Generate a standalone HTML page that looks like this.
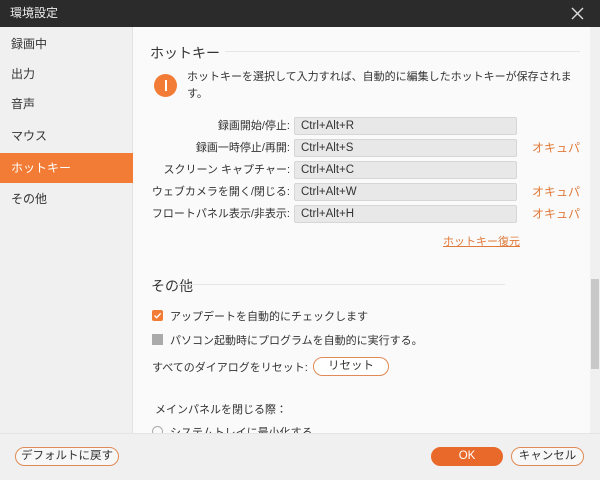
<!DOCTYPE html><html><head><meta charset="utf-8"><style>
*{margin:0;padding:0;box-sizing:border-box}
body{width:600px;height:480px;overflow:hidden;font-family:"Liberation Sans","Noto Sans CJK JP",sans-serif;font-size:11px;color:#333;background:#fafafa;position:relative}
.a{position:absolute;white-space:nowrap}
.title{left:0;top:0;width:600px;height:27px;background:#2b2b2b;color:#eee;font-size:12px;line-height:27px;padding-left:10px}
.side{left:0;top:27px;width:133px;height:406px;background:#f0f0f0;border-right:1px solid #e2e2e2}
.si{left:0;width:133px;height:30px;line-height:30px;padding-left:11px;font-size:12px;color:#333}
.inp{left:294px;width:223px;height:18px;background:#e8e8e8;border:1px solid #d6d6d6;border-radius:2px;line-height:16px;padding-left:6px;font-size:11.5px;color:#333}
.lbl{right:310px;line-height:18px}
.occ{left:532px;color:#e07a3a;line-height:18px;font-size:12px}
.btn{border:1px solid #e08a55;border-radius:10px;background:#fff;text-align:center;line-height:17px;font-size:11.5px}
</style></head><body>
<div class="a title">環境設定</div>
<svg class="a" style="left:571px;top:7px" width="13" height="13"><path d="M1 1L12 12M12 1L1 12" stroke="#ddd" stroke-width="1.4"/></svg>
<div class="a side"></div>
<div class="a si" style="top:29px">録画中</div>
<div class="a si" style="top:59px">出力</div>
<div class="a si" style="top:89px">音声</div>
<div class="a si" style="top:121px">マウス</div>
<div class="a si" style="top:153px;background:#f27c35;color:#fff">ホットキー</div>
<div class="a si" style="top:184px">その他</div>
<div class="a" style="left:150px;top:43px;font-size:14px">ホットキー</div>
<div class="a" style="left:225px;top:51px;width:355px;height:1px;background:#e6e6e6"></div>
<div class="a" style="left:154px;top:74px;width:23px;height:23px;border-radius:50%;background:#f27c35"></div>
<div class="a" style="left:165px;top:80px;width:1.5px;height:11px;background:#fff"></div>
<div class="a" style="left:187px;top:69px;line-height:17px;font-size:11px">ホットキーを選択して入力すれば、自動的に編集したホットキーが保存されま<br>す。</div>
<div class="a lbl" style="top:117px">録画開始/停止:</div><div class="a inp" style="top:117px">Ctrl+Alt+R</div>
<div class="a lbl" style="top:139px">録画一時停止/再開:</div><div class="a inp" style="top:139px">Ctrl+Alt+S</div><div class="a occ" style="top:139px">オキュパ</div>
<div class="a lbl" style="top:161px">スクリーン キャプチャー:</div><div class="a inp" style="top:161px">Ctrl+Alt+C</div>
<div class="a lbl" style="top:183px">ウェブカメラを開く/閉じる:</div><div class="a inp" style="top:183px">Ctrl+Alt+W</div><div class="a occ" style="top:183px">オキュパ</div>
<div class="a lbl" style="top:205px">フロートパネル表示/非表示:</div><div class="a inp" style="top:205px">Ctrl+Alt+H</div><div class="a occ" style="top:205px">オキュパ</div>
<div class="a" style="left:443px;top:233px;color:#e07a3a;text-decoration:underline;font-size:11px">ホットキー復元</div>
<div class="a" style="left:151px;top:276px;font-size:14px">その他</div>
<div class="a" style="left:175px;top:284px;width:330px;height:1px;background:#e6e6e6"></div>
<div class="a" style="left:152px;top:310px;width:11px;height:11px;background:#f27c35;border-radius:2px"></div>
<svg class="a" style="left:152px;top:310px" width="11" height="11"><path d="M2.5 5.5L4.7 7.7L8.7 3.3" stroke="#fff" stroke-width="1.4" fill="none"/></svg>
<div class="a" style="left:170px;top:308px">アップデートを自動的にチェックします</div>
<div class="a" style="left:152px;top:334px;width:11px;height:11px;background:#aaa"></div>
<div class="a" style="left:170px;top:332px">パソコン起動時にプログラムを自動的に実行する。</div>
<div class="a" style="left:152px;top:359px">すべてのダイアログをリセット:</div>
<div class="a btn" style="left:313px;top:357px;width:76px;height:19px">リセット</div>
<div class="a" style="left:155px;top:401px">メインパネルを閉じる際：</div>
<div class="a" style="left:152px;top:426px;width:11px;height:11px;border:1px solid #aaa;border-radius:50%"></div>
<div class="a" style="left:170px;top:424px">システムトレイに最小化する</div>
<div class="a" style="left:590px;top:27px;width:10px;height:406px;background:#f0f0f0"></div>
<div class="a" style="left:591px;top:279px;width:8px;height:90px;background:#c8c8c8"></div>
<div class="a" style="left:0;top:433px;width:600px;height:47px;background:#f0f0f0;border-top:1px solid #e4e4e4"></div>
<div class="a btn" style="left:15px;top:447px;width:104px;height:19px;background:#f7f7f7">デフォルトに戻す</div>
<div class="a btn" style="left:431px;top:447px;width:72px;height:19px;background:#e8692a;border-color:#e8692a;color:#fff">OK</div>
<div class="a btn" style="left:511px;top:447px;width:73px;height:19px;background:#f7f7f7">キャンセル</div>
</body></html>
